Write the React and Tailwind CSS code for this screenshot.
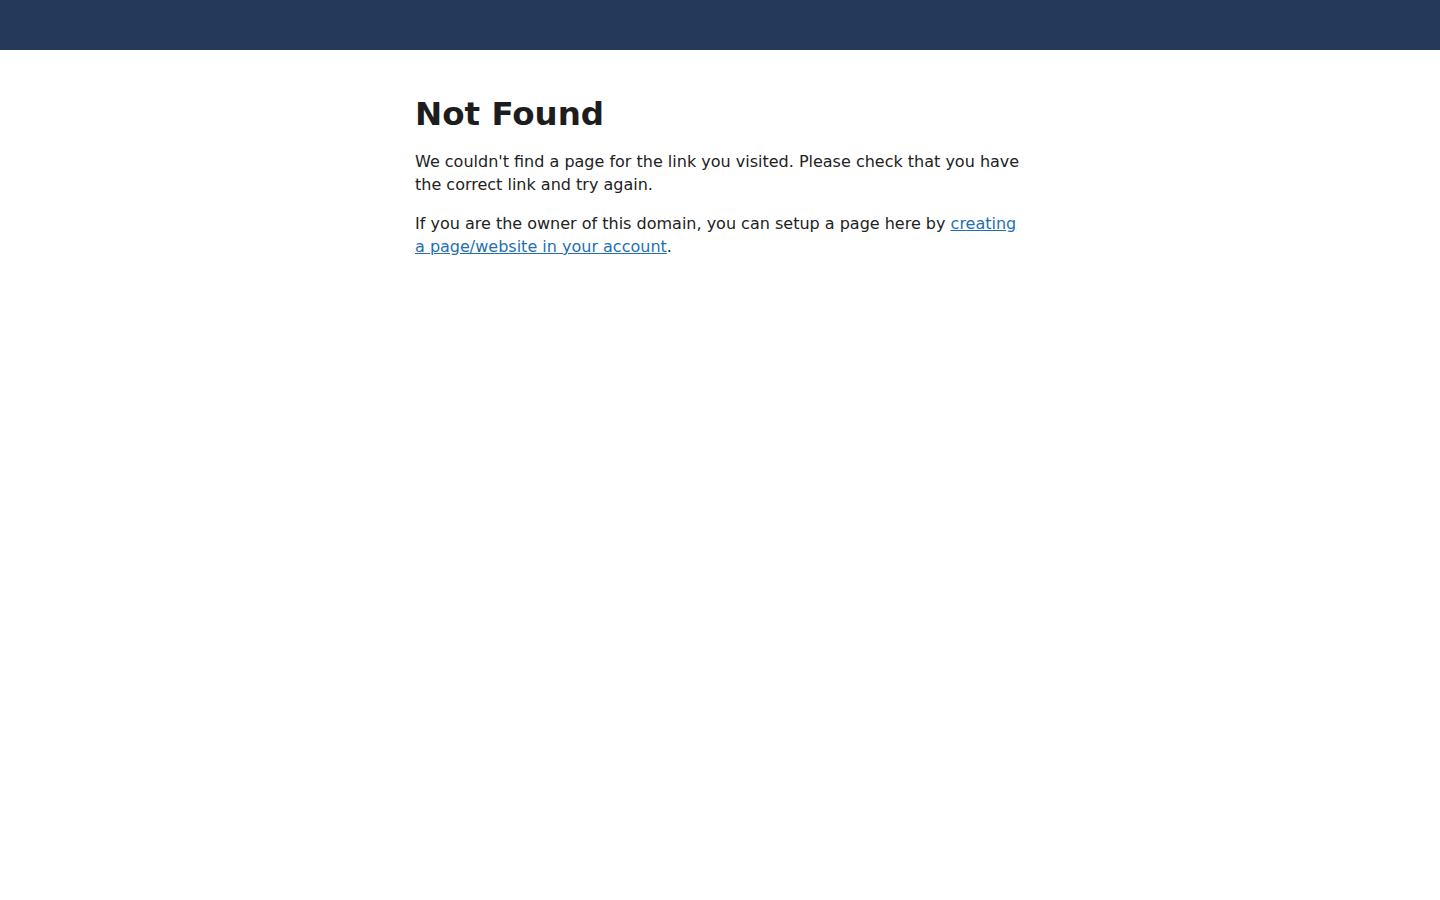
export default function App() {
  return (
    <div className="min-h-screen bg-white" style={{ fontFamily: '"DejaVu Sans", sans-serif' }}>
      <div className="h-[50px] bg-[#253a5a]" />
      <div className="mx-auto w-[640px] px-[15px] pt-[45px] text-[#222222]">
        <h1 className="text-[32.5px] font-bold leading-[38px] text-[#1d1d1d] mb-[17px]">Not Found</h1>
        <p className="text-[16px] leading-[23px] mb-[16px]">
          We couldn't find a page for the link you visited. Please check that you have the correct link and try again.
        </p>
        <p className="text-[16px] leading-[23px]">
          If you are the owner of this domain, you can setup a page here by{' '}
          <a href="#" className="text-[#1f6fb2] underline">creating a page/website in your account</a>.
        </p>
      </div>
    </div>
  );
}
